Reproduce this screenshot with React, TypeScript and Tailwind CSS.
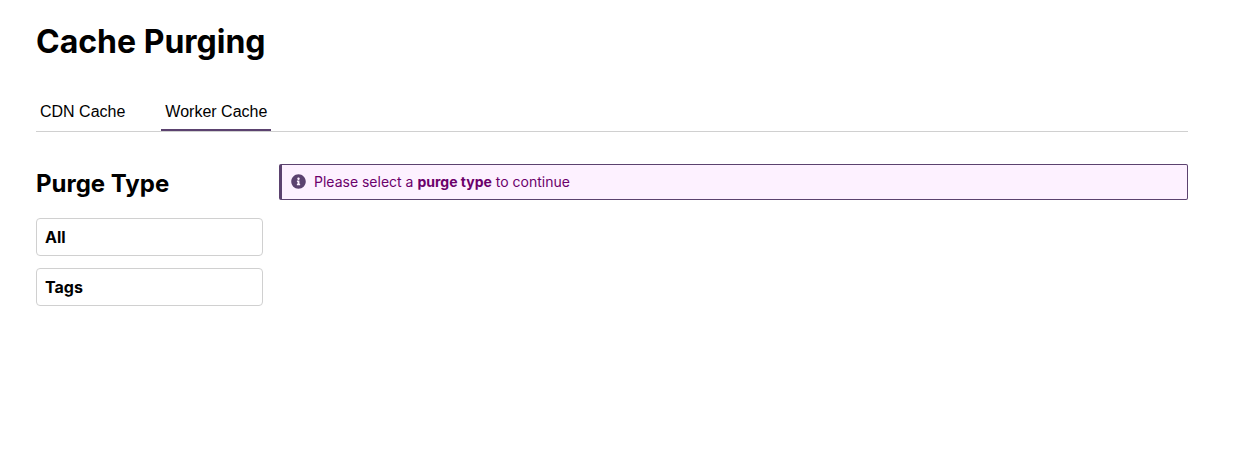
import { useState } from "react";
import { FaInfoCircle } from "react-icons/fa";

const tabs = ["CDN Cache", "Worker Cache"];
const purgeTypes = ["All", "Tags"];

interface TabsProps {
  active: string;
  onChange: (tab: string) => void;
}

const Tabs = ({ active, onChange }: TabsProps) => {
  return (
    <div role="tablist" className="flex gap-8 border-b border-[#d0d0d0]">
      {tabs.map((tab) => (
        <button
          key={tab}
          type="button"
          role="tab"
          aria-selected={tab === active}
          onClick={() => onChange(tab)}
          className={`cursor-pointer border-b-2 px-1 pt-2 pb-1 font-['Liberation_Sans',sans-serif] text-base leading-[26px] ${
            tab === active ? "border-[#5b426f]" : "border-transparent"
          }`}
        >
          {tab}
        </button>
      ))}
    </div>
  );
};

const App = () => {
  const [activeTab, setActiveTab] = useState("Worker Cache");

  return (
    <main className="mr-[31px] px-9 pt-5 font-['Inter',sans-serif] text-black">
      <h1 className="text-[32px] leading-11 font-bold">Cache Purging</h1>

      <div className="mt-[27px]">
        <Tabs active={activeTab} onChange={setActiveTab} />
      </div>

      <div className="mt-8 flex items-start gap-4">
        <section className="w-[227px] shrink-0">
          <h2 className="text-2xl leading-10 font-bold">Purge Type</h2>
          <div className="mt-3.5 flex flex-col gap-3">
            {purgeTypes.map((type) => (
              <button
                key={type}
                type="button"
                className="cursor-pointer rounded-[4px] border border-[#d0d0d0] px-2 py-1.5 text-left text-base leading-6 font-bold"
              >
                {type}
              </button>
            ))}
          </div>
        </section>

        <div
          role="status"
          className="flex grow items-start gap-2 rounded-xs border border-l-[3px] border-[#5b426f] bg-[#fdf1ff] px-[9px] py-1.5 text-sm leading-[22px] text-[#6b006b]"
        >
          <FaInfoCircle className="mt-[3px] size-[15px] shrink-0 text-[#5b426f]" />
          <p>
            Please select a <strong>purge type</strong> to continue
          </p>
        </div>
      </div>
    </main>
  );
};

export default App;
